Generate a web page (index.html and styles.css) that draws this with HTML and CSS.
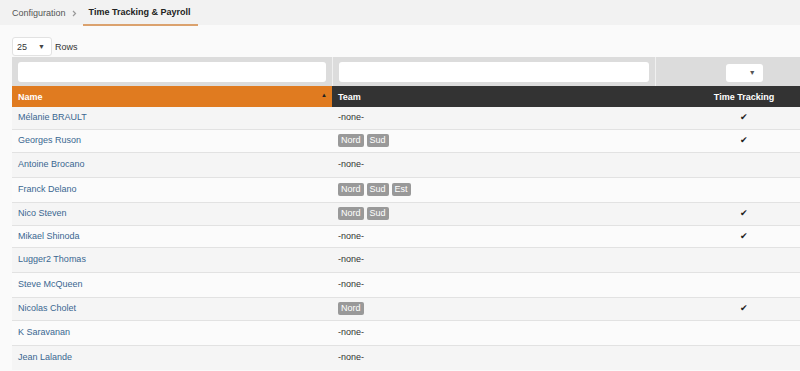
FILE: index.html
```html
<!DOCTYPE html>
<html lang="en">
<head>
<meta charset="utf-8">
<title>Time Tracking &amp; Payroll</title>
<link rel="stylesheet" href="styles.css">
</head>
<body>
<nav class="crumbs">
  <span class="crumb">Configuration</span>
  <svg class="chev" width="5" height="7" viewBox="0 0 5 7"><polyline points="1,1 3.5,3.5 1,6" fill="none" stroke="#999" stroke-width="1.2"/></svg>
  <span class="crumb current">Time Tracking &amp; Payroll</span>
</nav>
<main class="content">
  <div class="rows-ctl">
    <div class="rows-select"><span>25</span><span class="tri">▼</span></div>
    <span class="rows-label">Rows</span>
  </div>
  <table class="grid">
    <colgroup><col class="c-name"><col class="c-team"><col class="c-tt"></colgroup>
    <thead>
      <tr class="filters">
        <td><div class="finput"></div></td>
        <td><div class="finput"></div></td>
        <td class="center"><div class="fselect"><span class="tri">▼</span></div></td>
      </tr>
      <tr class="heads">
        <th class="sorted">Name<span class="sort">▲</span></th>
        <th>Team</th>
        <th class="center">Time Tracking</th>
      </tr>
    </thead>
    <tbody>
      <tr class="h22"><td><a>Mélanie BRAULT</a></td><td>-none-</td><td class="center"><span class="check">✔</span></td></tr>
      <tr class="h23"><td><a>Georges Ruson</a></td><td><span class="badge">Nord</span><span class="badge">Sud</span></td><td class="center"><span class="check">✔</span></td></tr>
      <tr class="h25"><td><a>Antoine Brocano</a></td><td>-none-</td><td class="center"></td></tr>
      <tr class="h25"><td><a>Franck Delano</a></td><td><span class="badge">Nord</span><span class="badge">Sud</span><span class="badge">Est</span></td><td class="center"></td></tr>
      <tr class="h23"><td><a>Nico Steven</a></td><td><span class="badge">Nord</span><span class="badge">Sud</span></td><td class="center"><span class="check">✔</span></td></tr>
      <tr class="h22"><td><a>Mikael Shinoda</a></td><td>-none-</td><td class="center"><span class="check">✔</span></td></tr>
      <tr class="h25"><td><a>Lugger2 Thomas</a></td><td>-none-</td><td class="center"></td></tr>
      <tr class="h25"><td><a>Steve McQueen</a></td><td>-none-</td><td class="center"></td></tr>
      <tr class="h23"><td><a>Nicolas Cholet</a></td><td><span class="badge">Nord</span></td><td class="center"><span class="check">✔</span></td></tr>
      <tr class="h25"><td><a>K Saravanan</a></td><td>-none-</td><td class="center"></td></tr>
      <tr class="h25"><td><a>Jean Lalande</a></td><td>-none-</td><td class="center"></td></tr>
    </tbody>
  </table>
</main>
</body>
</html>
```
FILE: styles.css
```css
html, body {
  margin: 0;
  padding: 0;
  background: #fafafa;
  overflow: hidden;
  font-family: "Liberation Sans", Arial, sans-serif;
  font-size: 9px;
  color: #333;
}

.crumbs {
  display: flex;
  align-items: stretch;
  height: 25px;
  background: #f2f2f2;
  padding-left: 12px;
  box-sizing: border-box;
}
.crumb {
  display: flex;
  align-items: center;
  color: #555;
}
.chev {
  align-self: center;
  margin: 1px 6px 0 6px;
}
.crumb.current {
  font-weight: bold;
  color: #222;
  padding: 0 8px 0 6px;
  border-bottom: 2px solid #dba26e;
  margin-bottom: -1px;
}

.content {
  padding: 12px 0 0 12px;
}

.rows-ctl {
  display: flex;
  align-items: center;
  height: 19px;
  margin-bottom: 1px;
}
.rows-select {
  width: 40px;
  height: 19px;
  box-sizing: border-box;
  background: #fff;
  border: 1px solid #e2e2e2;
  border-radius: 3px;
  display: flex;
  align-items: center;
  justify-content: space-between;
  padding: 0 6px 0 4px;
  color: #333;
  font-size: 9px;
}
.rows-select .tri { font-size: 7px; color: #444; }
.rows-label { margin-left: 3px; color: #333; }

.grid {
  border-collapse: collapse;
  table-layout: fixed;
  width: 821px;
}
.c-name { width: 320px; }
.c-team { width: 323px; }
.c-tt { width: 178px; }

.filters td {
  background: #dcdcdc;
  height: 29px;
  padding: 0 6px;
  box-sizing: border-box;
  border-left: 1px solid #f0f0f0;
}
.filters td:first-child { border-left: none; }
.finput {
  height: 20px;
  background: #fff;
  border-radius: 3px;
  margin-top: 1px;
}
.fselect {
  display: inline-flex;
  align-items: center;
  justify-content: flex-end;
  width: 37px;
  height: 18px;
  background: #fff;
  border-radius: 3px;
  padding-right: 7px;
  box-sizing: border-box;
  margin-top: 2px;
  vertical-align: middle;
}
.fselect .tri { font-size: 7px; color: #555; }

.heads th {
  background: #333;
  color: #fff;
  font-weight: bold;
  text-align: left;
  height: 21px;
  padding: 0 6px;
  box-sizing: border-box;
}
.heads th.sorted {
  background: #e07b20;
  position: relative;
}
.sort {
  position: absolute;
  right: 5px;
  top: 6px;
  font-size: 6px;
  color: #222;
}
.center { text-align: center !important; }

tbody td {
  padding: 0 6px;
  border-top: 1px solid #e2e2e2;
  vertical-align: middle;
  white-space: nowrap;
  line-height: 11px;
  box-sizing: border-box;
}
tbody tr:first-child td { border-top: none; }
tbody tr:nth-child(odd) td { background: #f5f5f5; }
tbody tr:nth-child(even) td { background: #fbfbfb; }
tr.h22 td { height: 22px; }
tr.h23 td { height: 23px; }
tr.h25 td { height: 25px; }

tbody a {
  color: #3a6791;
  text-decoration: none;
}
.badge {
  display: inline-block;
  vertical-align: middle;
  background: #999;
  color: #fff;
  border-radius: 2px;
  padding: 1px 3px;
  margin-right: 3px;
  line-height: 11px;
  font-size: 9px;
}
.check {
  font-size: 9px;
  color: #222;
}
```
